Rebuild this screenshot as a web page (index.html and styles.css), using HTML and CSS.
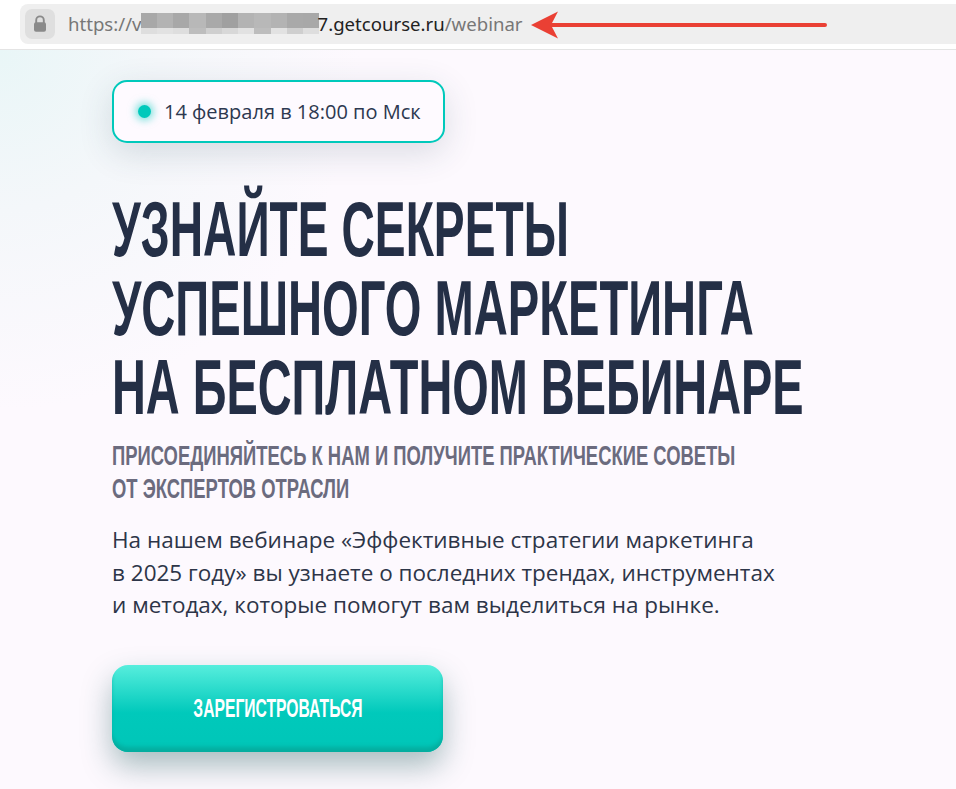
FILE: index.html
```html
<!DOCTYPE html>
<html lang="ru">
<head>
<meta charset="utf-8">
<title>Вебинар</title>
<link rel="stylesheet" href="styles.css">
</head>
<body>
<div class="browser">
  <div class="address">
    <div class="lock">
      <svg width="14" height="18" viewBox="0 0 14 18"><path d="M3.2 8V5.2a3.8 3.8 0 0 1 7.6 0V8" fill="none" stroke="#8a8a8a" stroke-width="1.9"/><rect x="1" y="7.2" width="12" height="9.6" rx="2" fill="#8a8a8a"/></svg>
    </div>
    <div class="url">
      <span class="dim">https://v</span><span class="mosaic"><i class="m1"></i><i class="m2"></i><i class="m1"></i><i class="m3"></i><i class="m4"></i><i class="m5"></i><i class="m2"></i><i class="m3"></i><i class="m2"></i><i class="m4"></i><i class="m1"></i></span><span class="dark">7.getcourse.ru</span><span class="dim">/webinar</span>
    </div>
    <svg class="arrow" width="298" height="30" viewBox="0 0 298 30"><path d="M0 15 27 1.5 21 13H294a2 2 0 0 1 0 4H21L27 28.5Z" fill="#ea4034"/></svg>
  </div>
</div>
<main class="page">
  <div class="badge"><span class="dot"></span><span>14 февраля в 18:00 по Мск</span></div>
  <h1><span class="line l1">УЗНАЙТЕ СЕКРЕТЫ</span><span class="line l2">УСПЕШНОГО МАРКЕТИНГА</span><span class="line l3">НА БЕСПЛАТНОМ ВЕБИНАРЕ</span></h1>
  <h2>ПРИСОЕДИНЯЙТЕСЬ К НАМ И ПОЛУЧИТЕ ПРАКТИЧЕСКИЕ СОВЕТЫ<br>ОТ ЭКСПЕРТОВ ОТРАСЛИ</h2>
  <p class="lead">На нашем вебинаре «Эффективные стратегии маркетинга<br>в 2025 году» вы узнаете о последних трендах, инструментах<br>и методах, которые помогут вам выделиться на рынке.</p>
  <a class="cta" href="#"><span class="cta-label">ЗАРЕГИСТРОВАТЬСЯ</span></a>
</main>
</body>
</html>
```
FILE: styles.css
```css
* { box-sizing: border-box; }
html, body { margin: 0; height: 100%; }
body { width: 956px; height: 789px; overflow: hidden; background: #fff; font-family: "Open Sans", "Noto Sans", sans-serif; display: flex; flex-direction: column; }
.browser { height: 50px; padding-top: 4px; padding-left: 20px; background: #fff; border-bottom: 1px solid #e4e4e4; flex: none; }
.address { height: 40px; background: #efefef; border-radius: 8px 0 0 8px; display: flex; align-items: center; padding-left: 5px; }
.lock { width: 30px; height: 30px; border-radius: 7px; background: #dfdfdf; display: flex; align-items: center; justify-content: center; }
.url { margin-left: 13px; padding-bottom: 1px; font-size: 18.6px; white-space: nowrap; display: flex; align-items: center; font-family: "Noto Sans", sans-serif; }
.dim { color: #777; }
.dark { color: #222; }
.mosaic { display: flex; width: 179px; height: 21px; margin-left: -1px; margin-right: -2px; }
.mosaic i { flex: 1; display: block; }
.m1 { background: linear-gradient(#a8a8a8 72%, #dedede 72%); }
.m2 { background: linear-gradient(#b3b3b3 72%, #e2e2e2 72%); }
.m3 { background: linear-gradient(#b8b8b8 72%, #bdbdbd 72%); }
.m4 { background: linear-gradient(#a9a9a9 72%, #cfcfcf 72%); }
.m5 { background: linear-gradient(#a0a0a0 72%, #d8d8d8 72%); }
.arrow { margin: 2px 0 0 8px; flex: none; }
.page { flex: 1; padding: 30px 0 0 112px; background: radial-gradient(circle at 0 0, #e9f6f7 0, #f4f7fa 160px, transparent 360px), #fdf9fe; color: #242f46; }
.badge { width: 333px; height: 63px; border: 2px solid #00c9bb; border-radius: 15px; background: #fefaff; box-shadow: 0 10px 34px rgba(40, 70, 90, .16); display: flex; align-items: center; padding-left: 24px; gap: 13px; font-size: 20px; color: #2d3850; }
.dot { width: 13px; height: 13px; border-radius: 50%; background: #00c9bb; box-shadow: 0 0 8px 2px rgba(0, 201, 187, .6); }
h1 { margin: 47px 0 0; font-family: "Liberation Sans", sans-serif; font-weight: 700; font-size: 77px; line-height: 79px; color: #242f46; }
.line { display: block; white-space: nowrap; transform-origin: 0 0; }
.l1 { transform: scaleX(.600); }
.l2 { transform: scaleX(.612); }
.l3 { transform: scaleX(.609); }
h2 { margin: 13px 0 0; font-family: "Liberation Sans", sans-serif; font-weight: 700; font-size: 27px; line-height: 33px; color: #6b6b7e; white-space: nowrap; transform: scaleX(.682); transform-origin: 0 0; }
.lead { margin: 18px 0 0; font-size: 22.5px; line-height: 32.5px; color: #2d3548; white-space: nowrap; }
.cta { display: flex; align-items: center; justify-content: center; margin-top: 43.5px; width: 331px; height: 87px; border-radius: 16px; background: linear-gradient(#57eedd, #00c9bb 55%, #00c6b8); box-shadow: inset 0 -6px 4px -1px #04ad9f, 0 14px 30px rgba(30, 90, 90, .38); color: #fff; text-decoration: none; }
.cta-label { font-family: "Liberation Sans", sans-serif; font-weight: 700; font-size: 25px; transform: scaleX(.627); white-space: nowrap; }
```
